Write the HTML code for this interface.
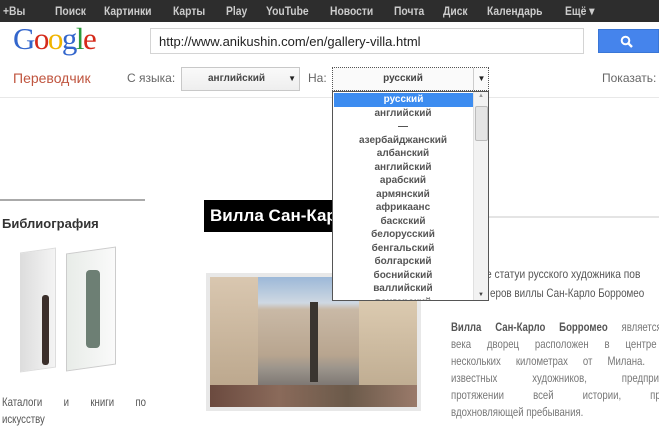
<!DOCTYPE html>
<html><head><meta charset="utf-8"><style>
*{margin:0;padding:0;box-sizing:border-box}
body{width:659px;height:438px;overflow:hidden;background:#fff;font-family:"Liberation Sans",Arial,sans-serif;position:relative}
.a{position:absolute;white-space:nowrap}
#top{left:0;top:0;width:659px;height:22px;background:#2d2d2d}
#top span{position:absolute;top:4px;font-size:12px;font-weight:bold;color:#ccc;transform:scaleX(0.86);transform-origin:left}
.sel{border:1px solid #c8c8c8;background:linear-gradient(#fafafa,#eee);font-size:10px;font-weight:bold;color:#444;text-align:center;line-height:22px}
.dd li{list-style:none;height:13.5px;line-height:13.5px;font-size:10px;font-weight:bold;color:#555;text-align:center}
.j{position:absolute;font-size:12px;color:#777;text-align:justify;text-align-last:justify;white-space:normal;transform:scaleX(0.8);transform-origin:left}
</style></head><body>
<div id="top" class="a">
<span style="left:3px">+Вы</span><span style="left:55px">Поиск</span><span style="left:104px">Картинки</span><span style="left:173px">Карты</span><span style="left:226px">Play</span><span style="left:266px">YouTube</span><span style="left:330px">Новости</span><span style="left:394px">Почта</span><span style="left:443px">Диск</span><span style="left:487px">Календарь</span><span style="left:565px">Ещё ▾</span>
</div>
<div class="a" style="left:13px;top:21px;font-family:'Liberation Serif',serif;font-size:31px;letter-spacing:-1.5px"><span style="color:#3366cc">G</span><span style="color:#d52a1a">o</span><span style="color:#f0b400">o</span><span style="color:#3366cc">g</span><span style="color:#2a9a3a">l</span><span style="color:#d52a1a">e</span></div>
<div class="a" style="left:150px;top:28px;width:434px;height:26px;border:1px solid #d4d4d4;font-size:13px;color:#222;padding:5px 8px">http://www.anikushin.com/en/gallery-villa.html</div>
<div class="a" style="left:598px;top:29px;width:61px;height:24px;background:#4584ec;border:1px solid #3a76d6"><svg width="14" height="14" style="position:absolute;left:21px;top:5px" viewBox="0 0 14 14"><circle cx="5.5" cy="5.5" r="3.8" stroke="#fff" stroke-width="2" fill="none"/><path d="M8.3 8.3L12 12" stroke="#fff" stroke-width="2.4"/></svg></div>
<div class="a" style="left:0;top:97px;width:659px;height:1px;background:#e8e8e8"></div>
<div class="a" style="left:13px;top:70px;font-size:14px;color:#c0553f">Переводчик</div>
<div class="a" style="left:127px;top:71px;font-size:12px;color:#666">С языка:</div>
<div class="a sel" style="left:181px;top:67px;width:119px;height:24px;text-align:left;padding-left:26px">английский<span style="position:absolute;right:3px;top:0;font-size:8px;color:#222">▼</span></div>
<div class="a" style="left:308px;top:71px;font-size:12px;color:#666">На:</div>
<div class="a sel" style="left:332px;top:67px;width:157px;height:24px;border:1px dotted #555;background:#fafafa"><span style="position:absolute;left:0;width:140px;top:0">русский</span><span style="position:absolute;left:140px;top:0;width:16px;height:22px;border-left:1px solid #ccc;font-size:8px;color:#222">▼</span></div>
<div class="a" style="left:602px;top:71px;font-size:12px;color:#666">Показать:</div>
<div class="a" style="left:0;top:199px;width:145px;height:2px;background:#aaa"></div>
<div class="a" style="left:2px;top:216px;font-size:13px;font-weight:bold;color:#333">Библиография</div>
<div class="a" style="left:20px;top:250px;width:36px;height:120px;background:linear-gradient(90deg,#ddd,#f4f4f4);transform:skewY(-8deg);border:1px solid #ddd"></div>
<div class="a" style="left:42px;top:295px;width:7px;height:70px;background:#3a2e2a;border-radius:3px"></div>
<div class="a" style="left:66px;top:250px;width:50px;height:118px;background:linear-gradient(90deg,#e8ece8,#fafafa);transform:skewY(-8deg);border:1px solid #ccc"></div>
<div class="a" style="left:86px;top:270px;width:14px;height:78px;background:#6d7f74;border-radius:4px"></div>
<div class="j" style="left:2px;top:395px;width:180px;color:#555">Каталоги и книги по</div>
<div class="a" style="left:2px;top:412px;font-size:12px;color:#555;transform:scaleX(0.8);transform-origin:left">искусству</div>
<div class="a" style="left:204px;top:200px;width:140px;height:32px;background:#000;color:#fff;font-size:17px;font-weight:bold;padding:6px 6px;overflow:hidden">Вилла Сан-Карло</div>
<div class="a" style="left:489px;top:216px;width:170px;height:2px;background:#e4e4e4"></div>
<div class="a" style="left:206px;top:273px;width:215px;height:138px;background:#e8e8e8;padding:4px">
<div style="width:100%;height:100%;background:linear-gradient(#9cb8d8 0,#cfd8e2 20%,#c9b9a6 25%,#b8a58f 60%,#9c958c 70%,#7a7470 85%,#5c4a40 100%);position:relative">
<div style="position:absolute;left:0;top:0;width:48px;height:100%;background:linear-gradient(#d9c7b0,#b7a287);"></div>
<div style="position:absolute;right:0;top:10px;width:58px;height:85%;background:linear-gradient(#e0cfb5,#bca98e)"></div>
<div style="position:absolute;left:100px;top:25px;width:8px;height:80px;background:#3a3530"></div>
<div style="position:absolute;left:0;bottom:0;width:100%;height:22px;background:linear-gradient(90deg,#6b4a3f,#8a6a5a,#6b5a4a,#9a7a6a)"></div>
</div></div>
<div class="a" style="left:486px;top:267px;font-size:12px;color:#555;transform:scaleX(0.85);transform-origin:left">е статуи русского художника пов</div>
<div class="a" style="left:490px;top:286px;font-size:12px;color:#555;transform:scaleX(0.82);transform-origin:left">еров виллы Сан-Карло Борромео</div>
<div class="j" style="left:451px;top:320px;width:300px"><b style="color:#555">Вилла Сан-Карло Борромео</b> является оча</div>
<div class="j" style="left:451px;top:337px;width:300px">века дворец расположен в центре обш</div>
<div class="j" style="left:451px;top:354px;width:300px">нескольких километрах от Милана. Любим</div>
<div class="j" style="left:451px;top:371px;width:300px">известных художников, предпринимате</div>
<div class="j" style="left:451px;top:388px;width:300px">протяжении всей истории, предлага</div>
<div class="a" style="left:451px;top:405px;font-size:12px;color:#777;transform:scaleX(0.8);transform-origin:left">вдохновляющей пребывания.</div>
<div class="a dd" style="left:332px;top:91px;width:157px;height:210px;border:1px solid #555;background:#fff;overflow:hidden">
<ul style="width:140px;padding-top:1px">
<li style="background:#3c8cf0;color:#fff;margin-left:1px">русский</li><li>английский</li><li>—</li><li>азербайджанский</li><li>албанский</li><li>английский</li><li>арабский</li><li>армянский</li><li>африкаанс</li><li>баскский</li><li>белорусский</li><li>бенгальский</li><li>болгарский</li><li>боснийский</li><li>валлийский</li><li>венгерский</li></ul>
<div style="position:absolute;left:140px;top:0;width:16px;height:208px;background:#f2f2f2;border-left:1px solid #e0e0e0">
<div style="position:absolute;left:1px;top:14px;width:13px;height:35px;background:#e4e4e4;border:1px solid #bbb;border-radius:2px"></div>
<div style="position:absolute;left:4px;top:1px;font-size:6px;color:#999">▲</div>
<div style="position:absolute;left:4px;bottom:2px;font-size:6px;color:#444">▼</div></div>
</div>
</body></html>
